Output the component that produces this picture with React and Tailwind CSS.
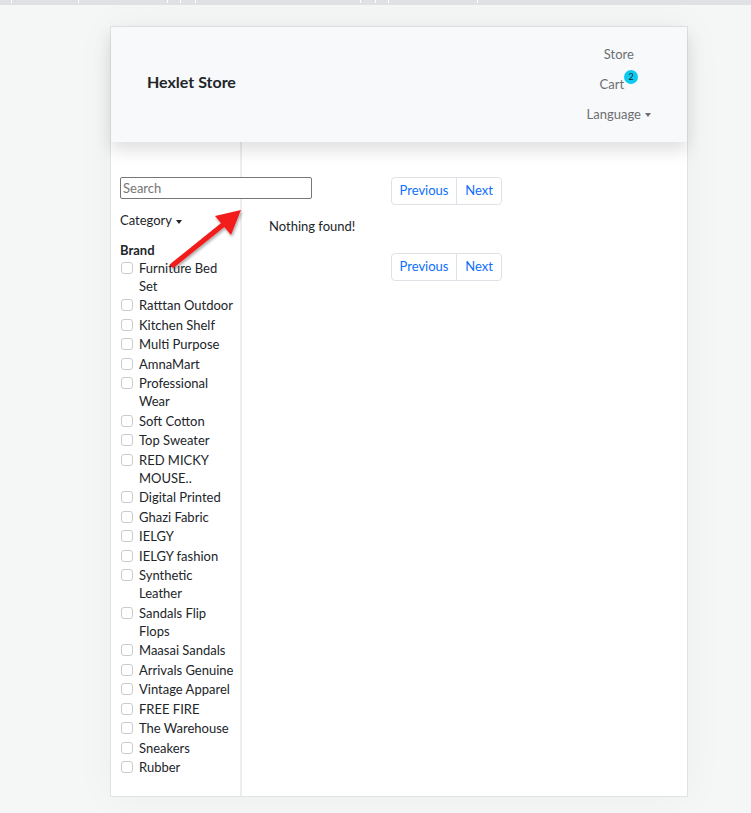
import React from "react";

const brands = [
  "Furniture Bed Set",
  "Ratttan Outdoor",
  "Kitchen Shelf",
  "Multi Purpose",
  "AmnaMart",
  "Professional Wear",
  "Soft Cotton",
  "Top Sweater",
  "RED MICKY MOUSE..",
  "Digital Printed",
  "Ghazi Fabric",
  "IELGY",
  "IELGY fashion",
  "Synthetic Leather",
  "Sandals Flip Flops",
  "Maasai Sandals",
  "Arrivals Genuine",
  "Vintage Apparel",
  "FREE FIRE",
  "The Warehouse",
  "Sneakers",
  "Rubber",
];

const ticks = [11, 78, 167, 180, 195, 360, 375, 388, 477];

function Pager() {
  return (
    <div className="flex h-[28px] w-[111px] rounded-[4px] border border-[#dee2e6] bg-white text-[13px] text-[#0d6efd]">
      <div className="flex w-[65px] items-center justify-center border-r border-[#dee2e6]">Previous</div>
      <div className="flex flex-1 items-center justify-center">Next</div>
    </div>
  );
}

function Caret() {
  return (
    <span className="ml-[4px] inline-block h-0 w-0 border-x-[3px] border-t-[4px] border-x-transparent border-t-current align-middle" />
  );
}

export default function App() {
  return (
    <div
      className="relative min-h-[813px] bg-[#f5f6f6] text-[#212529]"
      style={{ fontFamily: "Lato, 'Noto Sans', sans-serif" }}
    >
      <div className="relative h-[5px] bg-[#dfe1e5]">
        {ticks.map((x) => (
          <div key={x} className="absolute top-0 h-[3px] w-[1px] bg-white" style={{ left: x }} />
        ))}
      </div>
      <div className="pl-[110px] pt-[21px]">
        <div className="w-[578px] border border-[#e1e2e3] bg-white shadow-[0_0_40px_rgba(0,0,0,0.04)]">
          <header className="relative z-10 flex h-[115px] items-center justify-between bg-[#f8f9fa] pl-[36px] pr-[36px] shadow-[0_8px_16px_rgba(0,0,0,0.13)]">
            <div className="mb-[6px] text-[16px] font-bold text-[#212529]">Hexlet Store</div>
            <nav className="mb-[2px] flex flex-col items-center text-[13px] text-[#6c6f72]">
              <div className="leading-[30px]">Store</div>
              <div className="flex items-start leading-[30px]">
                <span>Cart</span>
                <span className="relative top-[1px] flex h-[14px] w-[14px] items-center justify-center rounded-full bg-[#0dcaf0] text-[9px] leading-none text-[#212529]">
                  2
                </span>
              </div>
              <div className="leading-[30px]">
                Language
                <Caret />
              </div>
            </nav>
          </header>
          <div className="flex">
            <aside className="w-[131px] shrink-0 border-r-2 border-[#eceded] pb-[20px] pl-[9px] pt-[33px]">
              <input
                placeholder="Search"
                className="h-[22px] w-[192px] rounded-[2px] border border-[#767676] bg-white px-[2px] text-[13px] placeholder:text-[#757575] outline-none"
              />
              <div className="mt-[12px] text-[13px] text-[#212529]">
                Category
                <Caret />
              </div>
              <div className="mt-[10px] text-[13px] font-bold leading-[18px]">Brand</div>
              <ul className="flex flex-col gap-[1.5px] text-[13px] leading-[18px]">
                {brands.map((b) => (
                  <li key={b} className="flex items-start">
                    <span className="mr-[6px] ml-[1px] mt-[3px] h-[12px] w-[12px] shrink-0 rounded-[3px] border border-[#c9cbcd] bg-white" />
                    <span className="pr-[4px]">{b}</span>
                  </li>
                ))}
              </ul>
            </aside>
            <main className="flex-1 pt-[35px]">
              <div className="pl-[149px]">
                <Pager />
              </div>
              <div className="mt-[12px] pl-[27px] text-[13px] leading-[18px]">Nothing found!</div>
              <div className="mt-[18px] pl-[149px]">
                <Pager />
              </div>
            </main>
          </div>
        </div>
      </div>
      <svg className="pointer-events-none absolute left-0 top-0" width="751" height="813">
        <defs>
          <filter id="ds" x="-50%" y="-50%" width="200%" height="200%">
            <feDropShadow dx="1" dy="2" stdDeviation="1.5" floodColor="#000" floodOpacity="0.35" />
          </filter>
        </defs>
        <g filter="url(#ds)">
          <line x1="173" y1="265" x2="224" y2="224" stroke="#f21b1b" strokeWidth="5" strokeLinecap="round" />
          <polygon points="241,210 215,216 231,235" fill="#f21b1b" />
        </g>
      </svg>
    </div>
  );
}
